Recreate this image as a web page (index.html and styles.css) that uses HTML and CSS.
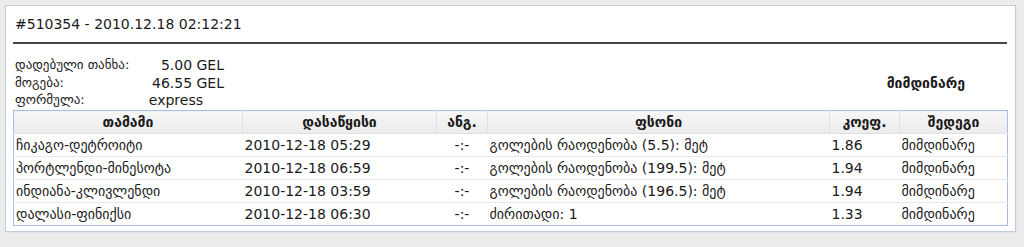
FILE: index.html
```html
<!DOCTYPE html>
<html lang="ka">
<head>
<meta charset="utf-8">
<title>#510354</title>
<link rel="stylesheet" href="styles.css">
</head>
<body>
<div class="panel">
  <div class="title">#510354 - 2010.12.18 02:12:21</div>
  <div class="rule"></div>
  <div class="info">
    <div class="summary">
      <div class="label">დადებული თანხა:</div><div class="value">5.00 GEL</div>
      <div class="label">მოგება:</div><div class="value">46.55 GEL</div>
      <div class="label">ფორმულა:</div><div class="value formula">express</div>
    </div>
    <div class="status">მიმდინარე</div>
  </div>
  <table class="bets">
    <colgroup>
      <col class="c-match"><col class="c-start"><col class="c-score"><col class="c-bet"><col class="c-odds"><col class="c-result">
    </colgroup>
    <thead>
      <tr><th>თამამი</th><th>დასაწყისი</th><th>ანგ.</th><th>ფსონი</th><th>კოეფ.</th><th>შედეგი</th></tr>
    </thead>
    <tbody>
      <tr><td>ჩიკაგო-დეტროიტი</td><td>2010-12-18 05:29</td><td class="score">-:-</td><td>გოლების რაოდენობა (5.5): მეტ</td><td>1.86</td><td>მიმდინარე</td></tr>
      <tr><td>პორტლენდი-მინესოტა</td><td>2010-12-18 06:59</td><td class="score">-:-</td><td>გოლების რაოდენობა (199.5): მეტ</td><td>1.94</td><td>მიმდინარე</td></tr>
      <tr><td>ინდიანა-კლივლენდი</td><td>2010-12-18 03:59</td><td class="score">-:-</td><td>გოლების რაოდენობა (196.5): მეტ</td><td>1.94</td><td>მიმდინარე</td></tr>
      <tr><td>დალასი-ფინიქსი</td><td>2010-12-18 06:30</td><td class="score">-:-</td><td>ძირითადი: 1</td><td>1.33</td><td>მიმდინარე</td></tr>
    </tbody>
  </table>
</div>
</body>
</html>
```
FILE: styles.css
```css
html, body {
  margin: 0;
  padding: 0;
}
body {
  background: #ececec;
  font-family: "DejaVu Sans", Verdana, sans-serif;
  font-size: 14px;
  color: #1a1a1a;
  height: 247px;
  overflow: hidden;
}
.panel {
  margin: 5px 8px 0 5px;
  background: #ffffff;
  border: 1px solid #c3cadb;
  box-shadow: 1px 1px 0 #e0e4ee;
  padding: 10px 8px 5px 7px;
}
.title {
  line-height: 17px;
  padding-left: 2px;
}
.rule {
  height: 2px;
  background: #474747;
  margin-top: 9px;
}
.info {
  display: flex;
  justify-content: space-between;
  align-items: center;
  margin-top: 12px;
}
.summary {
  display: grid;
  grid-template-columns: 132px 77px;
  grid-template-rows: 18px 17px 19px;
  padding-left: 2px;
  line-height: 18px;
}
.label {
  font-size: 13px;
}
.value {
  text-align: right;
}
.formula {
  padding-right: 21px;
}
.status {
  font-weight: bold;
  font-size: 14px;
  padding-right: 42px;
  padding-bottom: 1px;
}
.bets {
  width: 100%;
  border-collapse: collapse;
  border: 1px solid #aabde2;
  table-layout: fixed;
}
.c-match { width: 229px; }
.c-start { width: 194px; }
.c-score { width: 51px; }
.c-bet { width: 342px; }
.c-odds { width: 70px; }
.c-result { width: 108px; }
.bets th {
  height: 22px;
  padding: 0;
  font-size: 14px;
  font-weight: bold;
  text-align: center;
  background: linear-gradient(#f7f7f7, #ececec);
  border-left: 1px solid #e0e0e0;
  border-bottom: 1px solid #e0e0e0;
}
.bets th:first-child {
  border-left: none;
}
.bets td {
  height: 22px;
  padding: 0 0 0 2px;
  white-space: nowrap;
  border-bottom: 1px solid #e8e8e8;
}
.bets tbody tr:last-child td {
  border-bottom: none;
}
.bets td.score {
  text-align: center;
  padding-left: 0;
}
```
